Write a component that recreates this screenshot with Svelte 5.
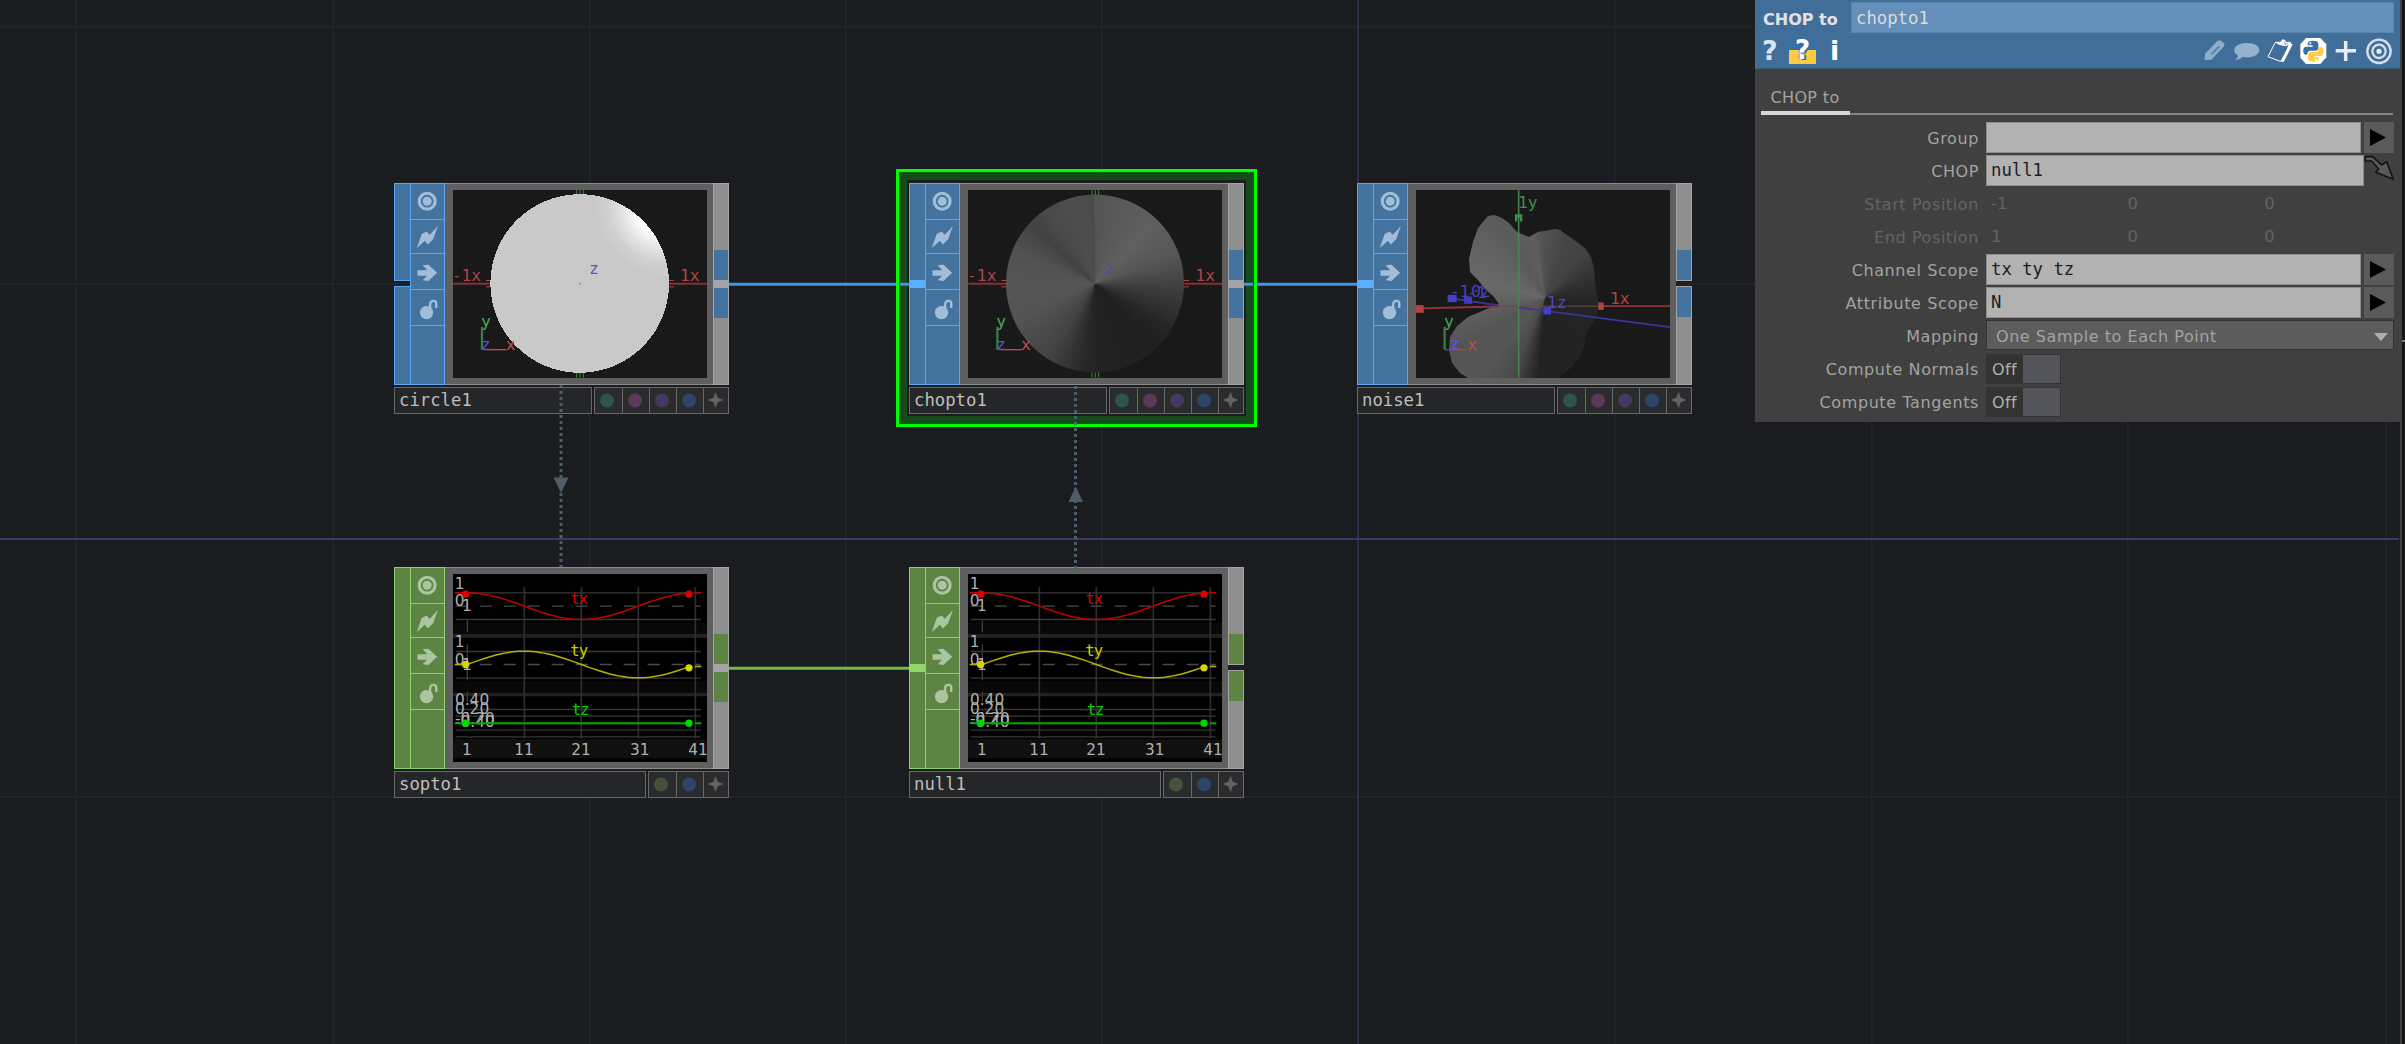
<script>
  const dotSets = {
    sop: ['#2c5450', '#5a3a57', '#43395f', '#2e4469'],
    chop: ['#45513b', '#2e4469']
  };
  const nodes = [
    { name: 'circle1', kind: 'sop', view: 'circle', input: 'open', output: 'wired', pos: 'n1', box: '204 60 762 563' },
    { name: 'chopto1', kind: 'sop', view: 'cone', input: 'wired', output: 'wired', pos: 'n2', box: '247 90 762 563' },
    { name: 'noise1', kind: 'sop', view: 'noise', input: 'wired', output: 'open', pos: 'n3', box: '213 60 762 563' },
    { name: 'sopto1', kind: 'chop', view: 'chart', input: 'none', output: 'wired', pos: 'n4', box: '204 57 762 563' },
    { name: 'null1', kind: 'chop', view: 'chart', input: 'wired', output: 'open', pos: 'n5', box: '204 57 762 563' }
  ];
  const params = [
    { label: 'Group', type: 'field', value: '', menu: true },
    { label: 'CHOP', type: 'ref', value: 'null1' },
    { label: 'Start Position', type: 'vec', values: ['-1', '0', '0'] },
    { label: 'End Position', type: 'vec', values: ['1', '0', '0'] },
    { label: 'Channel Scope', type: 'field', value: 'tx ty tz', menu: true },
    { label: 'Attribute Scope', type: 'field', value: 'N', menu: true },
    { label: 'Mapping', type: 'select', value: 'One Sample to Each Point' },
    { label: 'Compute Normals', type: 'toggle', value: 'Off' },
    { label: 'Compute Tangents', type: 'toggle', value: 'Off' }
  ];
  const gridX = [75, 332, 589, 845, 1101, 1614, 1871, 2127, 2385];
  const gridY = [26, 283, 796];
  const ticks = [418, 589, 760, 931];

  // One period of a cosine-like channel, sampled across the timeline
  function wave(y, phase) {
    let d = '';
    for (let i = 0; i <= 39; i++) {
      const px = 247 + i * 17.1;
      const py = y - 40 * Math.cos((i / 40) * 2 * Math.PI - phase);
      d += (i ? 'L' : 'M') + px.toFixed(1) + ' ' + py.toFixed(1);
    }
    return d;
  }
  const tx = wave(153, 0);
  const ty = wave(328, Math.PI / 2);
</script>

<main class="network">
  <svg class="layer" width="2405" height="1044" viewBox="0 0 2405 1044">
    {#each gridX as x}<rect {x} y="0" width="1.5" height="1044" fill="#24242e" />{/each}
    {#each gridY as y}<rect x="0" {y} width="2399" height="1.5" fill="#25252d" />{/each}
    <rect x="1357.3" y="0" width="1.5" height="1044" fill="#34345a" />
    <rect x="0" y="538" width="2399" height="2" fill="#3a3a66" />
  </svg>

  <div class="halo"></div>
  <svg class="layer" width="2405" height="1044" viewBox="0 0 2405 1044">
    <path d="M729 284.3H909M1244 284.3H1358" stroke="#3f94ea" stroke-width="3" />
    <path d="M729 668.3H909" stroke="#70b94b" stroke-width="3" />
  </svg>
  <div class="selection"></div>

  {#each nodes as n}
    <section class="node {n.kind} {n.pos}">
      <div class="body">
        <div class="in {n.input}">
          {#if n.input === 'none'}<i></i>{:else}<i></i><b></b><i></i>{/if}
        </div>
        <div class="flags">
          <svg class="f1" viewBox="77 41 102 106"><circle cx="127" cy="93" r="24.5" fill="none" stroke="currentColor" stroke-width="10" /><circle cx="127" cy="93" r="14" fill="currentColor" /></svg>
          <svg class="f2" viewBox="77 149 102 101"><path d="M95 235L110 192L125 184L135 194L160 167L146 207L129 224L120 213Z" fill="currentColor" /></svg>
          <svg class="f3" viewBox="77 252 102 106"><path d="M97 301H127L113 286L131 284L158 309L131 334L113 332L127 318H97Z" fill="currentColor" /></svg>
          <svg class="f4" viewBox="77 360 102 105"><circle cx="125" cy="428" r="20.5" fill="currentColor" /><path d="M136 416V402Q137 392 147 392Q155 392 155 401V414" fill="none" stroke="currentColor" stroke-width="7.5" /></svg>
        </div>
        <div class="frame">
          <div class="viewer {n.view}">
            {#if n.view === 'cone' || n.view === 'noise'}<div class="surface"></div>{/if}
            <svg viewBox={n.box} class="scene">
              {#if n.view === 'circle' || n.view === 'cone'}
                <g transform={n.view === 'cone' ? 'translate(44 30)' : ''}>
                  <path d="M204 341H317M852 341H966" stroke="#7a3536" stroke-width="6" />
                  <path d="M303 331H319M303 350H319M851 331H866M851 350H866" stroke="#b84243" stroke-width="3" />
                  <path d="M575 60V74M585 60V74M595 60V74M575 607V622M585 607V622M595 607V622" stroke="#3b8a3d" stroke-width="3" />
                  {#if n.view === 'circle'}
                    <defs>
                      <radialGradient id="shine" gradientUnits="userSpaceOnUse" cx="0" cy="0" r="1" gradientTransform="translate(800 148) rotate(45) scale(190 150)">
                        <stop offset="0" stop-color="#fff" /><stop offset=".25" stop-color="#fafafa" /><stop offset=".5" stop-color="#e4e4e4" /><stop offset=".75" stop-color="#d1d1d1" /><stop offset="1" stop-color="#c9c9c9" />
                      </radialGradient>
                    </defs>
                    <circle cx="584" cy="340" r="268" fill="url(#shine)" shape-rendering="crispEdges" />
                    <rect x="582" y="338" width="5" height="5" fill="#4b9ad8" />
                  {/if}
                  <text x="200" y="334" fill="#b14344">-1x</text>
                  <text x="885" y="334" fill="#b14344">1x</text>
                  <text x="612" y="311" fill={n.view === 'cone' ? '#4a49bd' : '#5555cc'}>z</text>
                  <path d="M291 470V538" stroke="#3d7a40" stroke-width="7" />
                  <path d="M300 538.5H364" stroke="#c74a4b" stroke-width="4" />
                  <text x="288" y="472" fill="#4aa64c">y</text>
                  <text x="287" y="541" fill="#5552ea">z</text>
                  <text x="362" y="541" fill="#c74a4b">x</text>
                </g>
              {:else if n.view === 'noise'}
                <path d="M213 415L459 409" stroke="#883639" stroke-width="6" />
                <path d="M459 408L760 408" stroke="#70484a" stroke-width="3" />
                <path d="M760 408L975 408" stroke="#883639" stroke-width="5" />
                <path d="M521 60V622" stroke="#478a4a" stroke-opacity=".9" stroke-width="5" />
                <path d="M320 385L459 405" stroke="#34348f" stroke-width="6" />
                <path d="M521 412L975 471" stroke="#38369c" stroke-width="5" />
                <rect x="213" y="405" width="23" height="23" fill="#b14344" />
                <rect x="760" y="397" width="16" height="22" fill="#b14344" />
                <path d="M510 154V132H532V154H525V142H517V154Z" fill="#3f8f42" />
                <rect x="308" y="374" width="27" height="22" fill="#4340cc" />
                <rect x="357" y="379" width="24" height="22" fill="#3c3ab6" />
                <rect x="595" y="411" width="23" height="22" fill="#4340cc" />
                <text x="519" y="115" fill="#418f44">1y</text>
                <text x="795" y="402" fill="#b14344">1x</text>
                <text x="606" y="415" fill="#4b49c4">1z</text>
                <text x="315" y="381" fill="#4442be">-1</text>
                <text x="366" y="383" fill="#4442be">-1</text>
                <clipPath id="behind"><path d="M360 330H396L440 382H360Z" /></clipPath>
                <text x="378" y="381" fill="#4442be" clip-path="url(#behind)">0z</text>
                <path d="M299 470V538" stroke="#3d7a40" stroke-width="7" />
                <path d="M299 539H322" stroke="#4a48ce" stroke-width="4" /><path d="M320 539H366" stroke="#b04445" stroke-width="4" />
                <text x="297" y="472" fill="#4aa64c">y</text>
                <text x="315" y="537" fill="#5552ea">z</text>
                <text x="367" y="541" fill="#c74a4b">x</text>
              {:else}
                <rect x="204" y="55" width="762" height="570" fill="#000" />
                <path d="M204 220H966M204 395H966" stroke="#080808" stroke-width="34" />
                <rect x="204" y="552" width="762" height="57" fill="#101010" />
                <path d="M204 242H966M204 418H966" stroke="#222" stroke-width="11" />
                {#each ticks as t}<path d="M{t} 96V550" stroke="#2e2e2e" stroke-width="5" />{/each}
                <path d="M247 195V231M247 268V375M247 410V440" stroke="#3c3c3c" stroke-width="4" />
                <path d="M212 113H947M212 193H947M212 289H947M212 369H947M212 463H947M212 483H947M212 525H947M212 545H947" stroke="#383838" stroke-width="4" />
                <path d="M212 153H947M212 328H947" stroke="#4a4a4a" stroke-width="4" stroke-dasharray="36 36" />
                <g class="num" fill="#b0b0b0">
                  <text x="209" y="101">1</text><text x="209" y="154">0</text><text x="231" y="169">1</text>
                  <text x="209" y="277">1</text><text x="209" y="329">0</text><text x="231" y="345">1</text>
                  <text x="210" y="451">0.40</text><text x="210" y="477">0.20</text><text x="210" y="506">-0.20</text><text x="210" y="517">-0.40</text>
                </g>
                <g class="num" fill="#b0b0b0">
                  <text x="231" y="600">1</text><text x="388" y="600">11</text><text x="559" y="600">21</text><text x="735" y="600">31</text><text x="910" y="600">41</text>
                </g>
                <path d={tx} fill="none" stroke="#c40000" stroke-width="4.5" /><path d="M209 113H247M930 113H949" stroke="#c40000" stroke-width="4.5" />
                <path d={ty} fill="none" stroke="#b5b500" stroke-width="4.5" /><path d="M209 328H247M930 334H949" stroke="#b5b500" stroke-width="4.5" />
                <path d="M209 504H912M930 504H949" stroke="#00a800" stroke-width="6" />
                <circle cx="242" cy="117" r="11" fill="#d80000" /><circle cx="912" cy="117" r="11" fill="#d80000" />
                <circle cx="242" cy="328" r="11" fill="#d4d400" /><circle cx="912" cy="338" r="11" fill="#d4d400" />
                <circle cx="242" cy="504" r="11" fill="#00d800" /><circle cx="912" cy="504" r="11" fill="#00d800" />
                <g class="chan"><text x="556" y="147" fill="#dc0000">tx</text><text x="556" y="303" fill="#cccc00">ty</text><text x="560" y="479" fill="#00d000">tz</text></g>
              {/if}
            </svg>
          </div>
        </div>
        <div class="out {n.output}"><i><u></u></i><b></b><i><u></u></i></div>
      </div>
      <div class="footer">
        <div class="name">{n.name}</div>
        <div class="dots">
          {#each dotSets[n.kind] as c}<span><svg viewBox="0 0 27 27"><circle cx="13" cy="13.5" r="7" fill={c} /></svg></span>{/each}
          <span><svg viewBox="0 0 27 27"><path d="M12.5 5L14.8 10.7L20.5 13L14.8 15.3L12.5 21L10.2 15.3L4.5 13L10.2 10.7Z" fill="#626262" /></svg></span>
        </div>
      </div>
    </section>
  {/each}

  <svg class="layer" width="2405" height="1044" viewBox="0 0 2405 1044">
    <path d="M561 379V567M1075.5 380V573" stroke="#566876" stroke-opacity=".85" stroke-width="3" stroke-dasharray="3 3" />
    <path d="M553.5 477.5H568.5L561 493Z M1068.5 502H1083L1075.7 486.5Z" fill="#4d5d6b" />
  </svg>

  <aside class="panel">
    <header>
      <div class="titlebar"><strong>CHOP to</strong><div class="opname">chopto1</div></div>
      <div class="tools">
        <span class="glyph help">?</span>
        <span class="pyhelp"><span>?</span></span>
        <span class="glyph info">i</span>
        <div class="right">
          <svg width="30" height="28" viewBox="60 20 90 84"><path d="M74 89L75 70L112 32Q118 28 123 31L132 39Q135 43 131 49L94 88Z" fill="#8eadc8" /><path d="M96 70L116 50" stroke="#5b84a9" stroke-width="6" stroke-linecap="round" /></svg>
          <svg width="32" height="28" viewBox="150 20 96 84"><path d="M200 38C224 38 238 47 238 59C238 72 222 81 202 81C196 81 192 80 188 79C183 85 175 88 165 88C172 84 174 80 173 75C166 71 163 65 163 59C163 47 178 38 200 38Z" fill="#94b2cd" /></svg>
          <svg width="34" height="28" viewBox="246 20 102 84"><path d="M286 36L264 79L303 94L325 51L332 36Z" fill="none" stroke="#fff" stroke-width="3" /><path d="M325 36L338 42L311 95L302 92L322 57Z M285 36L301 35L307 27L316 29L316 37L327 41L318 48L298 44Z" fill="#fff" /><path d="M313 37L318 44" stroke="#416e98" stroke-width="3" /></svg>
          <svg class="python" width="32" height="28" viewBox="351 20 96 84"><path d="M378 23H421L439 42V81L421 101H378L361 82V42Z" fill="#fff" /><path d="M383 40C383 29 413 29 415 39V53Q414 61 406 61H391Q382 62 382 72L377 74C367 70 367 51 377 49H398V45H383Z" fill="#3672a5" /><path d="M416 50L424 51C434 55 433 73 423 77H402V81H416V86C413 97 386 97 384 86V73Q385 65 393 65H408Q417 63 416 50Z" fill="#ffce44" /><circle cx="391" cy="39" r="3" fill="#fff" /><circle cx="407" cy="88" r="3" fill="#fff" /></svg>
          <svg width="33" height="28" viewBox="448 20 99 84"><path d="M498 32V92M468 61H529" stroke="#e4ebf2" stroke-width="10.5" /></svg>
          <svg class="target" width="30" height="28" viewBox="552 20 90 84"><g fill="none" stroke="#d4e0eb"><circle cx="597" cy="63" r="35" stroke-width="7" /><circle cx="597" cy="63" r="20" stroke-width="7" /></g><circle cx="597" cy="63" r="8" fill="#e4ebf2" /></svg>
        </div>
      </div>
    </header>
    <nav><span class="tab">CHOP to</span></nav>
    <div class="params">
      {#each params as p}
        <div class="row" class:disabled={p.type === 'vec'}>
          <label>{p.label}</label>
          {#if p.type === 'field'}
            <div class="field">{p.value}</div>
            <div class="menu"><svg width="16" height="17" viewBox="0 0 16 17"><path d="M0 0L16 8.5L0 17Z" /></svg></div>
          {:else if p.type === 'ref'}
            <div class="field">{p.value}</div>
            <svg class="jump" width="30" height="31" viewBox="867 466 90 93"><path d="M871 471H893L920 496L935 486L955 539L902 518L911 508L890 484H871Z" fill="#5a5a5a" stroke="#141414" stroke-width="5" stroke-linejoin="round" /></svg>
          {:else if p.type === 'vec'}
            <div class="vec">{#each p.values as v}<span>{v}</span>{/each}</div>
          {:else if p.type === 'select'}
            <div class="select"><span>{p.value}</span><svg width="14" height="8" viewBox="0 0 14 8"><path d="M0 0H14L7 8Z" fill="#b0b0b0" /></svg></div>
          {:else}
            <div class="toggle"><span>{p.value}</span><i></i></div>
          {/if}
        </div>
      {/each}
    </div>
  </aside>
  <div class="edge"><i></i></div>
</main>

<style>
  :global(body) { background: #1b1c1f; overflow: hidden; }
  .network { position: relative; width: 2405px; height: 1044px; background: #1b1c1f; overflow: hidden; font-family: "DejaVu Sans", sans-serif; font-size: 16px; }
  .network *, .network { box-sizing: border-box; }
  svg { display: block; }
  .layer { position: absolute; left: 0; top: 0; pointer-events: none; }

  .selection { position: absolute; left: 896px; top: 169px; width: 361px; height: 258px; border: 3px solid #00ff00; outline: 1px solid #07660c; outline-offset: -4px; }
  .halo { position: absolute; left: 899px; top: 172px; width: 355px; height: 252px; border: 8px solid #154a1a; background: #1b1c1f; }

  .node { position: absolute; width: 335px; display: flex; flex-direction: column; gap: 2px; --fill: #4573a0; --line: #58a8f5; --hot: #5ab0ff; --icon: #a1bdd7; }
  .chop { --fill: #5d8443; --line: #8bd364; --hot: #90d86a; --icon: #acc5a0; }
  .n1 { left: 394px; top: 183px; }
  .n2 { left: 909px; top: 183px; }
  .n3 { left: 1357px; top: 183px; }
  .n4 { left: 394px; top: 567px; }
  .n5 { left: 909px; top: 567px; }
  .body { display: flex; height: 202px; }
  .in { width: 17px; display: flex; flex-direction: column; margin-right: -1px; }
  .in i { flex: 1; background: var(--fill); border: 1px solid var(--line); }
  .in b { height: 5px; }
  .in.open i:first-child { flex: none; height: 98px; }
  .in.wired i:first-child { flex: none; height: 97px; border-bottom: 0; }
  .in.wired b { height: 8px; background: var(--hot); }
  .in.wired i:last-child { border-top: 0; }
  .flags { width: 35px; background: var(--fill); border: 1px solid var(--line); color: var(--icon); }
  .flags svg { width: 33px; border-bottom: 1px solid var(--line); }
  .f1 { height: 36px; }
  .f2 { height: 34px; }
  .f3 { height: 36px; }
  .f4 { height: 36px; }
  .frame { flex: 1; background: #5f5f5f; border-top: 1px solid #8d8d8d; border-bottom: 1px solid #8d8d8d; padding: 6px 0 0 8px; }
  .viewer { position: relative; width: 254px; height: 188px; background: #191919; overflow: hidden; }
  .scene { position: relative; width: 254px; height: 188px; font-family: "DejaVu Sans Mono", monospace; font-size: 49px; }
  .num { font-family: "DejaVu Sans", sans-serif; font-size: 46px; }
  .chan { font-size: 47px; letter-spacing: -3px; }
  .surface { position: absolute; left: 0; top: 0; width: 254px; height: 188px; }
  .cone .surface {
    background: conic-gradient(from 0deg at 127px 93.5px, #545454 0deg, #606060 45deg, #555 72deg, #393939 98deg, #252525 122deg, #202020 135deg, #222 175deg, #282828 188deg, #434343 212deg, #535353 245deg, #565656 265deg, #515151 292deg, #424242 313deg, #4a4a4a 328deg, #4e4e4e 345deg, #4b4b4b 359deg, #545454 360deg);
    clip-path: circle(89px at 127px 93.5px);
  }
  .noise .surface {
    background: conic-gradient(from 0deg at 129px 108px, #505050 0deg, #464646 20deg, #414141 42deg, #353535 60deg, #2b2b2b 78deg, #242424 100deg, #222 184deg, #303030 191deg, #4a4a4a 202deg, #565656 220deg, #545454 240deg, #5e5e5e 258deg, #686868 285deg, #626262 310deg, #5a5a5a 330deg, #5e5e5e 350deg, #525252 357deg, #505050 360deg);
    clip-path: path("M72 26L78 25L84 27L92 32L101 42L113 47L122 42L139 39L144 40L158 50L169 58L175 67L178 78L180 100L183 113L181 126L176 134L170 144L168 157L163 168L155 178L142 188L52 188L44 183L36 173L33 160L34 147L41 136L52 127L71 119L83 114L78 107L69 99L62 90L54 82L53 69L57 52L62 38Z");
  }
  .out { width: 16px; display: flex; flex-direction: column; }
  .out i { display: flex; flex-direction: column; border: 1px solid #a3a3a5; background: #8f8f8f; }
  .out u { height: 30px; background: var(--fill); }
  .out i:first-child { height: 98px; justify-content: flex-end; }
  .out i:last-child { flex: 1; }
  .out b { height: 5px; }
  .out.wired b { height: 6px; background: #a5a5a8; }
  .footer { display: flex; height: 27px; gap: 2px; }
  .name { flex: 1; border: 1px solid #68696b; background: #252628; color: #bdbdbd; font: 17.3px/25px "DejaVu Sans Mono", monospace; padding-left: 4px; }
  .dots { display: flex; border: 1px solid #68696b; background: #2a2b2c; }
  .dots span { width: 27px; }
  .dots span + span { border-left: 1px solid #68696b; }
  .dots span:last-child { width: 25px; }
  .dots svg { width: 27px; height: 27px; margin-top: -1px; margin-left: -1px; }

  .panel { position: absolute; left: 1755px; top: 0; width: 645px; height: 422px; background: #404040; color: #a3a3a3; letter-spacing: .35px; }
  header { height: 69px; background: #416e98; padding: 2px 6px 0 8px; border-bottom: 1px solid #3a5f82; }
  .titlebar { display: flex; height: 31px; }
  strong { width: 88px; line-height: 35px; color: #e2e2e2; letter-spacing: 0; white-space: nowrap; }
  .opname { flex: 1; background: #648fba; border: 1px solid #5985b1; color: #dadada; font: 17.3px/30px "DejaVu Sans Mono", monospace; letter-spacing: 0; padding-left: 4px; }
  .tools { display: flex; height: 32px; padding-top: 3px; letter-spacing: 0; font-weight: bold; }
  .glyph { font-size: 27px; line-height: 30px; color: #fff; }
  .help { width: 27px; margin-left: -1px; color: #d9e4ee; }
  .pyhelp { width: 27px; height: 27px; margin-top: 1px; background: linear-gradient(#3472a5 50%, #fdcb42 50%); color: #fff; text-align: center; }
  .pyhelp span { font-size: 26px; line-height: 26px; text-shadow: -1px 0 #3472a5, 1px 0 #3472a5, 2px 1px #3472a5; }
  .info { margin-left: 14px; }
  .right { display: flex; margin-left: auto; align-items: flex-start; }
  .right svg { margin-top: 1px; }
  .python { margin-left: 1px; }
  .target { margin-left: 2px; }
  nav { margin: 10px 7px 0 6px; height: 36px; display: flex; border-bottom: 2px solid #858585; }
  .tab { width: 89px; height: 36px; border-bottom: 4px solid #d9d9d9; padding-left: 9.5px; line-height: 37px; white-space: nowrap; }
  .params { display: flex; flex-direction: column; gap: 2px; padding: 7px 6px 0 0; }
  .row { display: flex; height: 31px; }
  label { width: 224px; margin-right: 7px; text-align: right; line-height: 34px; letter-spacing: .6px; white-space: nowrap; }
  .field { flex: 1; background: #b2b2b2; border: 1px solid #8c8c8c; color: #1c1c1c; font: 17.3px/29px "DejaVu Sans Mono", monospace; letter-spacing: 0; padding-left: 4px; }
  .menu { width: 30px; margin-left: 3px; background: #5a5a5a; display: flex; align-items: center; padding-left: 6px; }
  .vec { flex: 1; display: flex; font: 16.5px/31px "DejaVu Sans", sans-serif; letter-spacing: 0; padding-left: 5px; }
  .vec span { flex: none; width: 136.6px; }
  .vec span:last-child { width: auto; }
  .disabled { color: #646464; }
  .select { flex: 1; display: flex; align-items: center; justify-content: space-between; height: 30px; border: 1px solid #333; background: #5c5c5c; padding: 3px 5px 0 9px; letter-spacing: .55px; }
  .toggle { display: flex; width: 75px; height: 30px; background: #333; padding: 1px; margin-top: 1px; }
  .toggle span { width: 36px; padding-left: 5px; line-height: 30px; color: #b0b0b0; }
  .toggle i { flex: 1; background: #54545b; }
  .edge { position: absolute; right: 0; top: 0; width: 5px; height: 1044px; background: #161616; border-left: 2px solid #404040; padding-top: 340px; }
  .edge i { display: block; height: 2px; background: #777; }
</style>
